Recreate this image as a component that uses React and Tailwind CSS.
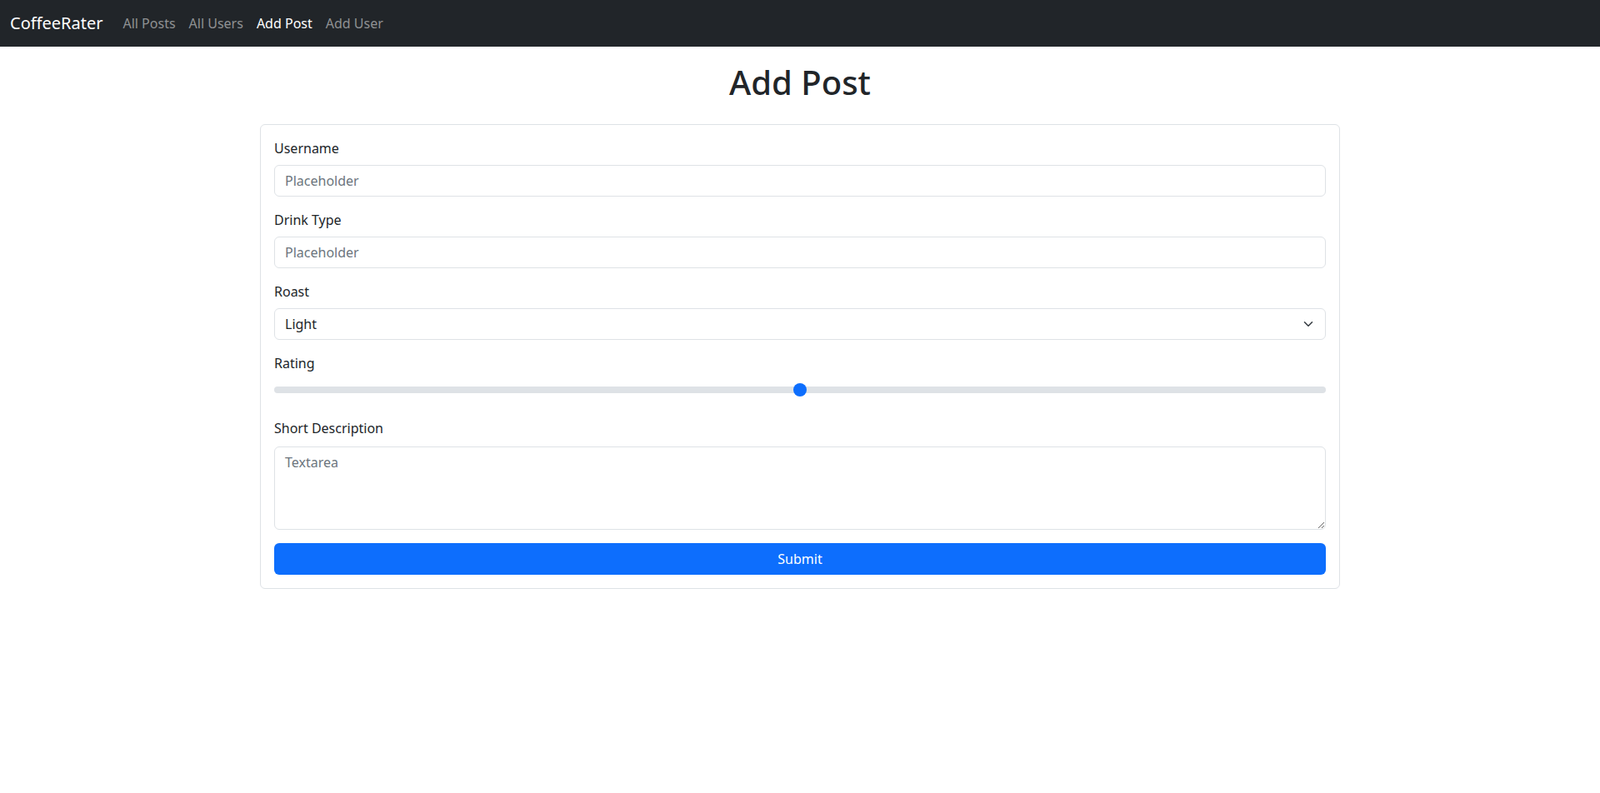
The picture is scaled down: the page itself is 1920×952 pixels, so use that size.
import React from "react";

const font = { fontFamily: '"Noto Sans", "Open Sans", sans-serif' };

function Label({ children }) {
  return <label className="block text-base leading-6 text-[#212529] mb-2">{children}</label>;
}

export default function App() {
  return (
    <div className="min-h-[952px] bg-white text-[#212529]" style={font}>
      <nav className="h-14 bg-[#212529] flex items-center px-3">
        <span className="text-[20px] leading-[30px] text-white mr-4">CoffeeRater</span>
        <div className="flex items-center">
          <a className="px-2 text-base leading-6 text-[#8f9193]">All Posts</a>
          <a className="px-2 text-base leading-6 text-[#8f9193]">All Users</a>
          <a className="px-2 text-base leading-6 text-white">Add Post</a>
          <a className="px-2 text-base leading-6 text-[#8f9193]">Add User</a>
        </div>
      </nav>

      <div className="w-[1296px] mx-auto">
        <h1 className="text-[40px] leading-[48px] font-medium text-center mt-[19px] mb-[26px]">Add Post</h1>

        <div className="border border-[#dee2e6] rounded-md p-4">
          <div className="mb-4">
            <Label>Username</Label>
            <input
              className="block w-full h-[38px] px-3 border border-[#dee2e6] rounded-md text-base leading-6 placeholder:text-[#6c757d] outline-none"
              placeholder="Placeholder"
            />
          </div>
          <div className="mb-4">
            <Label>Drink Type</Label>
            <input
              className="block w-full h-[38px] px-3 border border-[#dee2e6] rounded-md text-base leading-6 placeholder:text-[#6c757d] outline-none"
              placeholder="Placeholder"
            />
          </div>
          <div className="mb-4">
            <Label>Roast</Label>
            <div className="relative h-[38px] border border-[#dee2e6] rounded-md flex items-center px-3 text-base leading-6 text-[#212529]">
              <span>Light</span>
              <svg className="absolute right-[14px] top-1/2 -translate-y-1/2" width="12" height="12" viewBox="0 0 16 16" fill="none">
                <path d="m2 5 6 6 6-6" stroke="#343a40" strokeWidth="2" strokeLinecap="round" strokeLinejoin="round" />
              </svg>
            </div>
          </div>
          <div className="mb-[22px]">
            <Label>Rating</Label>
            <div className="relative h-6 flex items-center">
              <div className="w-full h-2 rounded-full bg-[#dee2e6]" />
              <div className="absolute left-1/2 top-1/2 -translate-x-1/2 -translate-y-1/2 w-4 h-4 rounded-full bg-[#0d6efd]" />
            </div>
          </div>
          <div className="mb-4">
            <label className="block text-base leading-6 text-[#212529] mb-[10px]">Short Description</label>
            <textarea
              className="block w-full h-[100px] px-3 py-1.5 border border-[#dee2e6] rounded-md text-base leading-6 placeholder:text-[#6c757d] outline-none"
              placeholder="Textarea"
            />
          </div>
          <button className="block w-full h-[38px] rounded-md bg-[#0d6efd] text-white text-base leading-6">
            Submit
          </button>
        </div>
      </div>
    </div>
  );
}
